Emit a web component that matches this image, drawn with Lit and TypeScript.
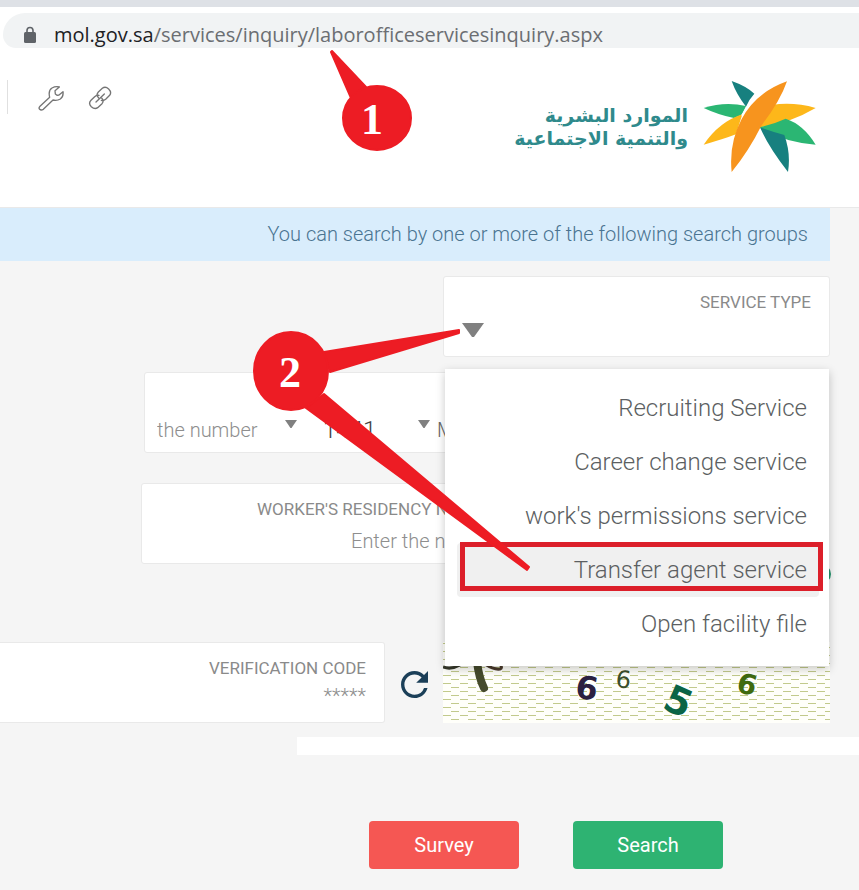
import { LitElement, html, css, svg } from "lit";
import { customElement, state } from "lit/decorators.js";
import { classMap } from "lit/directives/class-map.js";

const SERVICES = [
  "Recruiting Service",
  "Career change service",
  "work's permissions service",
  "Transfer agent service",
  "Open facility file",
];

const CAPTCHA_DIGITS = [
  { digit: "6", x: 131, y: 55, size: 32, angle: 10, color: "#2b2140", weight: 700 },
  { digit: "6", x: 172, y: 45, size: 24, angle: 6, color: "#3c4f2a", weight: 400 },
  { digit: "5", x: 218, y: 66, size: 38, angle: 24, color: "#0b6445", weight: 700 },
  { digit: "6", x: 292, y: 49, size: 28, angle: 16, color: "#3f6a10", weight: 700 },
];

@customElement("app-root")
export class AppRoot extends LitElement {
  @state() private selected = "Transfer agent service";

  static styles = css`
    :host {
      display: block;
      min-height: 100vh;
      overflow-x: hidden;
      background: #f5f5f5;
      font-family: Roboto, "Open Sans", sans-serif;
      color: #666;
    }
    * {
      box-sizing: border-box;
    }
    button,
    input,
    select {
      font-family: inherit;
      border: 0;
      margin: 0;
      padding: 0;
      background: none;
      color: inherit;
      outline: none;
    }
    svg {
      display: block;
      flex: none;
    }
    .tabs {
      height: 7px;
      background: #dee1e6;
    }
    .toolbar {
      position: relative;
      background: #fff;
      padding: 6px 0 0 3px;
    }
    .omnibox {
      display: flex;
      align-items: center;
      gap: 17px;
      height: 35px;
      padding: 8px 0 0 20px;
      border-radius: 22px 0 0 13px;
      background: #f1f3f4;
    }
    .url {
      flex: 1;
      font: 20px/26px "Open Sans", "Noto Sans", sans-serif;
      color: #6b6e72;
      white-space: nowrap;
    }
    .host {
      color: #202124;
    }
    .callout {
      position: absolute;
      z-index: 3;
      pointer-events: none;
    }
    .callout-one {
      left: 328px;
      top: 41px;
    }
    .callout-two {
      left: -193px;
      top: 52px;
    }
    .callout-fill {
      fill: #ed1c24;
      stroke: #ed1c24;
      stroke-width: 2;
      stroke-linejoin: round;
    }
    .callout-text {
      font: bold 44px "Liberation Serif", serif;
      fill: #fff;
      text-anchor: middle;
    }
    .header {
      display: flex;
      align-items: flex-start;
      height: 160px;
      padding: 32px 43px 0 7px;
      background: #fff;
      border-bottom: 1px solid #e9e9e9;
    }
    .tools {
      display: flex;
      align-items: center;
      gap: 24px;
      height: 34px;
      padding: 2px 0 0 30px;
      border-left: 1px solid #e0e0e0;
    }
    .tools a {
      display: block;
      color: #757575;
    }
    .brand {
      display: flex;
      gap: 15px;
      margin-left: auto;
    }
    .brand-name {
      padding-top: 24px;
      font: bold 19px/23px "DejaVu Sans", sans-serif;
      color: #2f8a8c;
      white-space: nowrap;
    }
    .main {
      padding-right: 29px;
    }
    .notice {
      margin: 0;
      padding: 2px 22px 2px 0;
      background: #d9edfc;
      text-align: right;
      font-size: 20px;
      font-weight: 300;
      line-height: 49px;
      color: #4a7491;
    }
    .card {
      height: 81px;
      padding: 12px 18px;
      background: #fff;
      border: 1px solid #e9e9e9;
      border-radius: 3px;
    }
    .label {
      display: block;
      font-size: 17px;
      line-height: 26px;
      color: #8a8a8a;
      white-space: nowrap;
    }
    .field {
      display: block;
      width: 100%;
      height: 30px;
      font-size: 20px;
      font-weight: 300;
      appearance: none;
    }
    .field::placeholder {
      color: #8e8e8e;
      opacity: 1;
    }
    .service {
      position: relative;
      width: 387px;
      margin: 15px 0 15px auto;
    }
    .service-card {
      text-align: right;
    }
    .select-line {
      display: flex;
      align-items: center;
    }
    .menu {
      position: absolute;
      z-index: 2;
      top: 93px;
      left: 2px;
      right: 1px;
      margin: 0;
      padding: 12px 10px 15px 12px;
      list-style: none;
      background: #fff;
      box-shadow: 0 3px 9px rgba(0, 0, 0, 0.22);
    }
    .option {
      display: block;
      width: 100%;
      height: 54px;
      padding: 0 12px;
      border-radius: 4px;
      text-align: right;
      font-size: 24px;
      font-weight: 300;
      color: #5c5f62;
      white-space: nowrap;
    }
    .active {
      position: relative;
      background: #f0f0f0;
    }
    .marker {
      position: absolute;
      left: 3px;
      right: -4px;
      top: -1px;
      height: 49px;
      border: 5px solid #dc1f2a;
      pointer-events: none;
    }
    .date {
      display: flex;
      align-items: center;
      margin: 0 2px 30px 144px;
      padding: 34px 12px 0;
    }
    .date svg {
      margin-bottom: 12px;
    }
    .number {
      width: 128px;
    }
    .year {
      width: 94px;
      padding-left: 26px;
      margin-right: 27px;
      font-size: 24px;
      color: #444;
    }
    .month {
      flex: 1;
      width: auto;
      padding-left: 7px;
    }
    .residency {
      margin: 0 2px 0 141px;
      padding-left: 115px;
    }
    .residency .field {
      height: 38px;
      padding-left: 94px;
    }
    .extras {
      display: flex;
      justify-content: flex-end;
      height: 78px;
    }
    .add {
      width: 20px;
      height: 20px;
      margin-right: -1px;
      border-radius: 50%;
      background: #23936b;
    }
    .verify {
      display: flex;
      align-items: center;
    }
    .code {
      flex: 1;
      min-width: 0;
      border-left: 0;
      border-radius: 0 3px 3px 0;
      text-align: right;
    }
    .code .field {
      text-align: right;
    }
    .refresh {
      margin: 4px 15px 0 16px;
      color: #1b3f58;
    }
    .captcha-digit {
      font-family: "DejaVu Sans", sans-serif;
    }
    .band {
      height: 18px;
      margin: 14px -29px 66px 297px;
      background: #fff;
    }
    .actions {
      display: flex;
      justify-content: flex-end;
      gap: 54px;
      padding: 0 107px 20px 0;
    }
    .btn {
      width: 150px;
      height: 48px;
      border-radius: 4px;
      font-size: 20px;
      color: #fff;
    }
    .survey {
      background: #f55753;
    }
    .search {
      background: #2eb372;
    }
  `;

  private arrow(width: number, height: number) {
    return html`<svg width=${width} height=${height} viewBox="0 0 22 14" preserveAspectRatio="none" aria-hidden="true">
      <path d="M0 0H22L12 14H10Z" fill="#808080" />
    </svg>`;
  }

  private logo() {
    return html`<svg width="113" height="93" viewBox="9 15 339 279" role="img" aria-label="Ministry emblem">
      <path fill="#17807f" d="M95 18Q138 33 163 56Q148 72 138 95Q109 58 95 18Z" />
      <path fill="#2bb673" d="M11 99Q75 78 138 93L126 119L102 129Q56 120 11 99Z" />
      <path fill="#fdb71a" d="M11 209Q58 140 127 118L108 178Q66 194 11 209Z" />
      <path fill="#fdb71a" d="M347 99Q280 80 215 90L178 157Q265 147 347 99Z" />
      <path fill="#2bb673" d="M347 209Q310 148 257 131Q220 148 178 157Q250 201 347 209Z" />
      <path fill="#17807f" d="M180 157Q205 215 264 291Q273 235 253 180Q215 170 180 157Z" />
      <path fill="none" stroke="#fff" stroke-width="6" d="M180 55Q145 87 126 122" />
      <path fill="#f7941e" d="M261 19Q168 52 125 132Q86 205 95 291Q148 225 184 152Q240 80 261 19Z" />
    </svg>`;
  }

  private captcha() {
    return html`<svg width="387" height="81" viewBox="0 0 387 81" role="img" aria-label="Verification code picture">
      <defs>
        <pattern id="dashes" width="17" height="8" patternUnits="userSpaceOnUse">
          <path d="M0 1.5H8M8 5.5H16" stroke="#c2ca8c" />
        </pattern>
      </defs>
      <rect width="387" height="81" fill="#fffffa" />
      <rect width="387" height="81" fill="url(#dashes)" />
      <path d="M0 25Q8 28 17 23" fill="none" stroke="#35382a" stroke-width="3" />
      <path d="M42 22Q51 28 57 27Q60 26 57 22" fill="none" stroke="#4a3a2c" stroke-width="3" />
      <path d="M34 20Q36 36 41 46" fill="none" stroke="#454a2c" stroke-width="8" stroke-linecap="round" />
      ${CAPTCHA_DIGITS.map(
        (d) => svg`<text class="captcha-digit" transform="translate(${d.x} ${d.y}) rotate(${d.angle})"
          font-size=${d.size} font-weight=${d.weight} fill=${d.color}>${d.digit}</text>`
      )}
    </svg>`;
  }

  render() {
    return html`
      <div class="tabs"></div>
      <div class="toolbar">
        <div class="omnibox">
          <svg width="14" height="18" viewBox="0 0 14 18" aria-hidden="true">
            <rect x="1" y="6" width="12" height="11" rx="1.5" fill="#5f6368" />
            <path d="M4 7V4.5a3 3 0 0 1 6 0V7" fill="none" stroke="#5f6368" stroke-width="1.6" />
          </svg>
          <div class="url"><span class="host">mol.gov.sa</span>/services/inquiry/laborofficeservicesinquiry.aspx</div>
        </div>
        <svg class="callout callout-one" width="86" height="106" viewBox="328 48 86 106">
          <path class="callout-fill" d="M332 51L366 87L351 98L331 52Z" />
          <ellipse class="callout-fill" cx="377" cy="118" rx="34" ry="32" />
          <text class="callout-text" x="372" y="134">1</text>
        </svg>
      </div>

      <header class="header">
        <nav class="tools">
          <a href="#tools" aria-label="Tools">
            <svg width="26" height="26" viewBox="112 254 78 78" fill="none" stroke="currentColor" stroke-width="4" stroke-linejoin="round">
              <path d="M118 318L147 291Q142 270 154 263Q165 257 176 260L163 271L164 281L169 285L175 284L187 274Q189 289 179 296Q169 302 157 299L128 327Q121 331 117 327Q113 323 118 318Z" />
            </svg>
          </a>
          <a href="#links" aria-label="Links">
            <svg width="24" height="24" viewBox="261 260 72 72" fill="none" stroke="currentColor" stroke-width="4" stroke-linecap="round" stroke-linejoin="round">
              <path d="M293 296Q284 287 292 278L304 267Q313 260 323 269Q333 279 326 288L314 300Q308 305 301 303" />
              <path d="M294 288Q286 287 281 292L270 303Q261 312 271 322Q281 331 290 325L303 313Q310 304 302 296" />
              <path d="M285 308L310 284" />
            </svg>
          </a>
        </nav>
        <div class="brand">
          <div class="brand-name" lang="ar" dir="rtl">الموارد البشرية<br />والتنمية الاجتماعية</div>
          ${this.logo()}
        </div>
      </header>

      <main class="main">
        <p class="notice">You can search by one or more of the following search groups</p>
        <section class="service">
          <div class="card service-card">
            <label class="label" for="service">SERVICE TYPE</label>
            <div class="select-line">
              ${this.arrow(22, 14)}
              <select class="field" id="service">
                <option></option>
              </select>
            </div>
          </div>
          <ul class="menu">
            ${SERVICES.map((name) => {
              const active = name === this.selected;
              return html`<li>
                <button class=${classMap({ option: true, active })} @click=${() => (this.selected = name)}>
                  ${name}${active ? html`<span class="marker"></span>` : ""}
                </button>
              </li>`;
            })}
          </ul>
          <svg class="callout callout-two" width="285" height="248" viewBox="250 328 285 248">
            <path class="callout-fill" d="M324 352L459 330V333L330 372Z" />
            <path class="callout-fill" d="M324 394L529 567L527 570L306 408Z" />
            <ellipse class="callout-fill" cx="291" cy="371" rx="37" ry="39" />
            <text class="callout-text" x="290" y="387">2</text>
          </svg>
        </section>

        <section class="card date">
          <input class="field number" placeholder="the number" aria-label="the number" />
          ${this.arrow(12, 8)}
          <select class="field year" aria-label="Year">
            <option>1441</option>
          </select>
          ${this.arrow(12, 8)}
          <select class="field month" aria-label="Month">
            <option>Month</option>
          </select>
        </section>

        <section class="card residency">
          <label class="label" for="residency">WORKER'S RESIDENCY NUMBER</label>
          <input class="field" id="residency" placeholder="Enter the number" />
        </section>

        <div class="extras"><button class="add" aria-label="Add"></button></div>

        <section class="verify">
          <div class="card code">
            <label class="label" for="code">VERIFICATION CODE</label>
            <input class="field" id="code" placeholder="*****" />
          </div>
          <button class="refresh" aria-label="Refresh">
            <svg width="27" height="27" viewBox="4 4 16 16" fill="currentColor">
              <path d="M17.65 6.35A7.96 7.96 0 0 0 12 4c-4.42 0-7.99 3.58-7.99 8s3.57 8 7.99 8c3.73 0 6.84-2.55 7.73-6h-2.08A5.99 5.99 0 0 1 12 18c-3.31 0-6-2.69-6-6s2.69-6 6-6c1.66 0 3.14.69 4.22 1.78L13 11h7V4z" />
            </svg>
          </button>
          ${this.captcha()}
        </section>

        <div class="band"></div>
        <div class="actions">
          <button class="btn survey">Survey</button>
          <button class="btn search">Search</button>
        </div>
      </main>
    `;
  }
}
